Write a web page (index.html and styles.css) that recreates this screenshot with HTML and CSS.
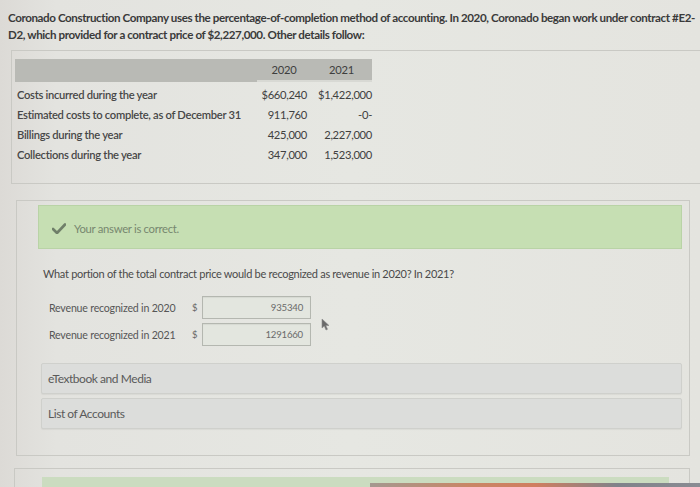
FILE: index.html
```html
<!DOCTYPE html>
<html>
<head>
<meta charset="utf-8">
<link rel="stylesheet" href="styles.css">
</head>
<body>
<div class="page">
  <p class="intro">Coronado Construction Company uses the percentage-of-completion method of accounting. In 2020, Coronado began work under contract #E2-D2, which provided for a contract price of $2,227,000. Other details follow:</p>

  <div class="panel panel-data">
    <table class="data">
      <thead>
        <tr><th class="lbl"></th><th>2020</th><th>2021</th></tr>
      </thead>
      <tbody>
        <tr><td class="lbl">Costs incurred during the year</td><td>$660,240</td><td>$1,422,000</td></tr>
        <tr><td class="lbl">Estimated costs to complete, as of December 31</td><td>911,760</td><td>-0-</td></tr>
        <tr><td class="lbl">Billings during the year</td><td>425,000</td><td>2,227,000</td></tr>
        <tr><td class="lbl">Collections during the year</td><td>347,000</td><td>1,523,000</td></tr>
      </tbody>
    </table>
  </div>

  <div class="panel panel-q">
    <div class="correct">
      <svg class="check" width="14" height="11" viewBox="0 0 14 11"><path d="M1 6 L5 10 L13 1.5" fill="none" stroke="#6f7f69" stroke-width="2.6" stroke-linecap="round" stroke-linejoin="round"/></svg>
      <span>Your answer is correct.</span>
    </div>
    <p class="question">What portion of the total contract price would be recognized as revenue in 2020? In 2021?</p>
    <div class="answers">
      <div class="arow">
        <span class="alabel">Revenue recognized in 2020</span><span class="dollar">$</span><span class="ainput">935340</span>
      </div>
      <div class="arow">
        <span class="alabel">Revenue recognized in 2021</span><span class="dollar">$</span><span class="ainput">1291660</span>
        <svg class="cursor" width="9" height="13" viewBox="0 0 9 13"><path d="M1 1 L1 10 L3.3 8 L5 12 L6.5 11.3 L4.8 7.5 L8 7.5 Z" fill="#6a6a6a" stroke="#8a8a8a" stroke-width="0.6"/></svg>
      </div>
    </div>
    <div class="links">
      <div class="linkbox">eTextbook and Media</div>
      <div class="linkbox">List of Accounts</div>
    </div>
  </div>

  <div class="panel panel-next">
    <div class="green-strip"></div>
  </div>
</div>
<div class="edge"></div>
</body>
</html>
```

FILE: styles.css
```css
html, body {
  margin: 0;
  padding: 0;
  height: 487px;
  overflow: hidden;
}
body {
  background: linear-gradient(90deg, #dcdad6 0%, #e3e3df 8%, #e6e7e2 50%, #e4e4df 100%);
  font-family: Lato, "Open Sans", sans-serif;
  color: #3c3c3c;
}
.page {
  padding-top: 9px;
}
.intro {
  margin: 0 0 0 8px;
  padding-right: 0;
  font-size: 11.6px;
  font-weight: 700;
  line-height: 17px;
  letter-spacing: -0.4px;
  color: #3a3a3a;
}
.panel {
  border: 1px solid #c9c9c4;
}
.panel-data {
  margin: 7px 0 0 11px;
  border-right: none;
  height: 124px;
  padding: 8px 0 0 3px;
}
.data {
  border-collapse: collapse;
  font-size: 11.2px;
  letter-spacing: -0.3px;
}
.data thead th {
  background: #b9bab5;
  height: 21px;
  padding: 0;
  font-weight: 400;
  color: #3e3e3e;
  text-align: center;
  border-bottom: 2px solid #d8d9d4;
}
.data thead th.lbl {
  width: 242px;
  border-bottom-color: #b9bab5;
}
.data thead th:nth-child(2) { width: 54px; }
.data thead th:nth-child(3) { width: 61px; }
.data td {
  padding: 0;
  height: 20px;
  text-align: right;
  color: #404040;
}
.data td.lbl {
  text-align: left;
  padding-left: 2px;
  font-weight: 600;
  color: #474747;
}
.data tbody td:nth-child(2) { padding-right: 4px; }
.data tbody td:nth-child(3) { padding-right: 0; }
.data tbody tr:first-child td { padding-top: 2px; }

.panel-q {
  margin: 16px 10px 0 16px;
  height: 250px;
  padding: 4px 7px 0 21px;
}
.correct {
  background: #c6dfb3;
  border: 1px solid #b9d3a6;
  height: 42px;
  display: flex;
  align-items: center;
  padding-left: 13px;
  font-size: 11.3px;
  color: #77876f;
  letter-spacing: -0.3px;
}
.check { margin-right: 8px; margin-top: 3px; }
.correct span { margin-top: 3px; }
.question {
  margin: 18px 0 0 5px;
  font-size: 11px;
  letter-spacing: -0.3px;
  color: #4a4a4a;
}
.answers {
  margin: 16px 0 0 11px;
  display: flex;
  flex-direction: column;
  gap: 4px;
}
.arow {
  display: flex;
  align-items: center;
  font-size: 10.6px;
  color: #565656;
  letter-spacing: -0.2px;
  position: relative;
}
.alabel { width: 143px; }
.dollar { width: 10px; font-size: 9.5px; color: #666; }
.ainput {
  width: 100px;
  height: 21px;
  border: 1px solid #b4b7b0;
  background: #e3e6df;
  text-align: right;
  padding-right: 7px;
  line-height: 21px;
  font-size: 9.6px;
  letter-spacing: -0.2px;
  color: #6a6a6a;
  box-shadow: inset 0 1px 1px rgba(0,0,0,0.06);
}
.cursor {
  position: absolute;
  left: 272px;
  top: -5px;
}
.links {
  margin: 17px 0 0 3px;
  display: flex;
  flex-direction: column;
  gap: 4px;
}
.linkbox {
  height: 29px;
  background: #dcdddb;
  border: 1px solid #cfd0cc;
  border-radius: 2px;
  padding-left: 6px;
  display: flex;
  align-items: center;
  font-size: 12px;
  letter-spacing: -0.45px;
  color: #5a5a5a;
  box-shadow: 0 1px 1px rgba(0,0,0,0.05);
}
.panel-next {
  margin: 12px 10px 0 14px;
  height: 20px;
  padding: 8px 20px 0 27px;
  border-bottom: none;
}
.green-strip {
  height: 12px;
  background: #cbdcc0;
}
.edge {
  position: fixed;
  left: 370px;
  right: 0;
  bottom: 0;
  height: 4px;
  background: linear-gradient(90deg, #a49890 0%, #c98666 30%, #d07e60 50%, #80828a 75%, #8a8c93 100%);
}
```
